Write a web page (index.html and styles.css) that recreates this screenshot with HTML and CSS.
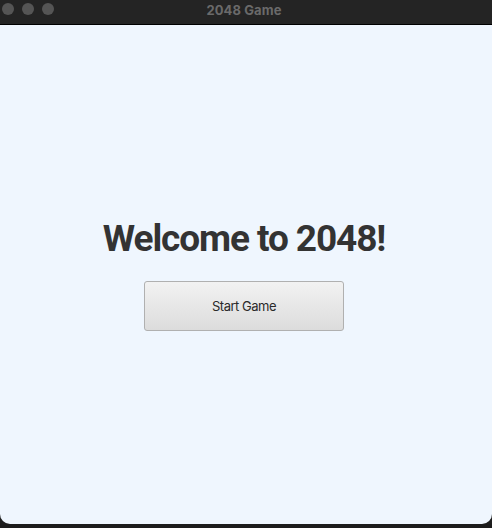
FILE: index.html
```html
<!DOCTYPE html>
<html>
<head>
<meta charset="utf-8">
<link rel="stylesheet" href="styles.css">
</head>
<body>
<div class="window">
  <div class="titlebar">
    <div class="lights"><span class="light"></span><span class="light"></span><span class="light"></span></div>
    <div class="title">2048 Game</div>
  </div>
  <div class="content">
    <h1 class="heading">Welcome to 2048!</h1>
    <button class="start">Start Game</button>
  </div>
  <div class="bottom"></div>
</div>
</body>
</html>
```
FILE: styles.css
```css
html, body { margin: 0; padding: 0; }
body { width: 492px; height: 528px; background: #1e1e1e; font-family: Inter, "Noto Sans", sans-serif; overflow: hidden; }
.window { display: flex; flex-direction: column; height: 528px; }
.titlebar { position: relative; height: 24px; background: #242424; border-bottom: 1px solid #000; display: flex; align-items: center; justify-content: center; flex: none; }
.lights { position: absolute; left: 2px; top: 3px; display: flex; gap: 8px; }
.light { width: 12px; height: 12px; border-radius: 50%; background: #555; }
.title { color: #6a6a6a; font-weight: 700; font-size: 13px; letter-spacing: 0.1px; margin-top: -5px; margin-left: -4px; }
.content { flex: 1; background: #eff6fe; border-radius: 0 0 10px 10px; display: flex; flex-direction: column; align-items: center; justify-content: center; padding: 0 4px 2px 0; }
.heading { margin: 0 0 20px; font-family: Roboto, Inter, sans-serif; font-size: 37px; font-weight: 700; color: #333; letter-spacing: -1.1px; line-height: 44px; }
.start { width: 200px; height: 50px; border: 1px solid #b0b0b0; border-radius: 3px; background: linear-gradient(#f2f2f2, #dcdcdc); font-family: Inter, sans-serif; font-size: 13px; color: #2a2a2a; letter-spacing: -0.5px; padding: 0; }
.bottom { height: 4px; background: #1c1c1c; flex: none; }
```
